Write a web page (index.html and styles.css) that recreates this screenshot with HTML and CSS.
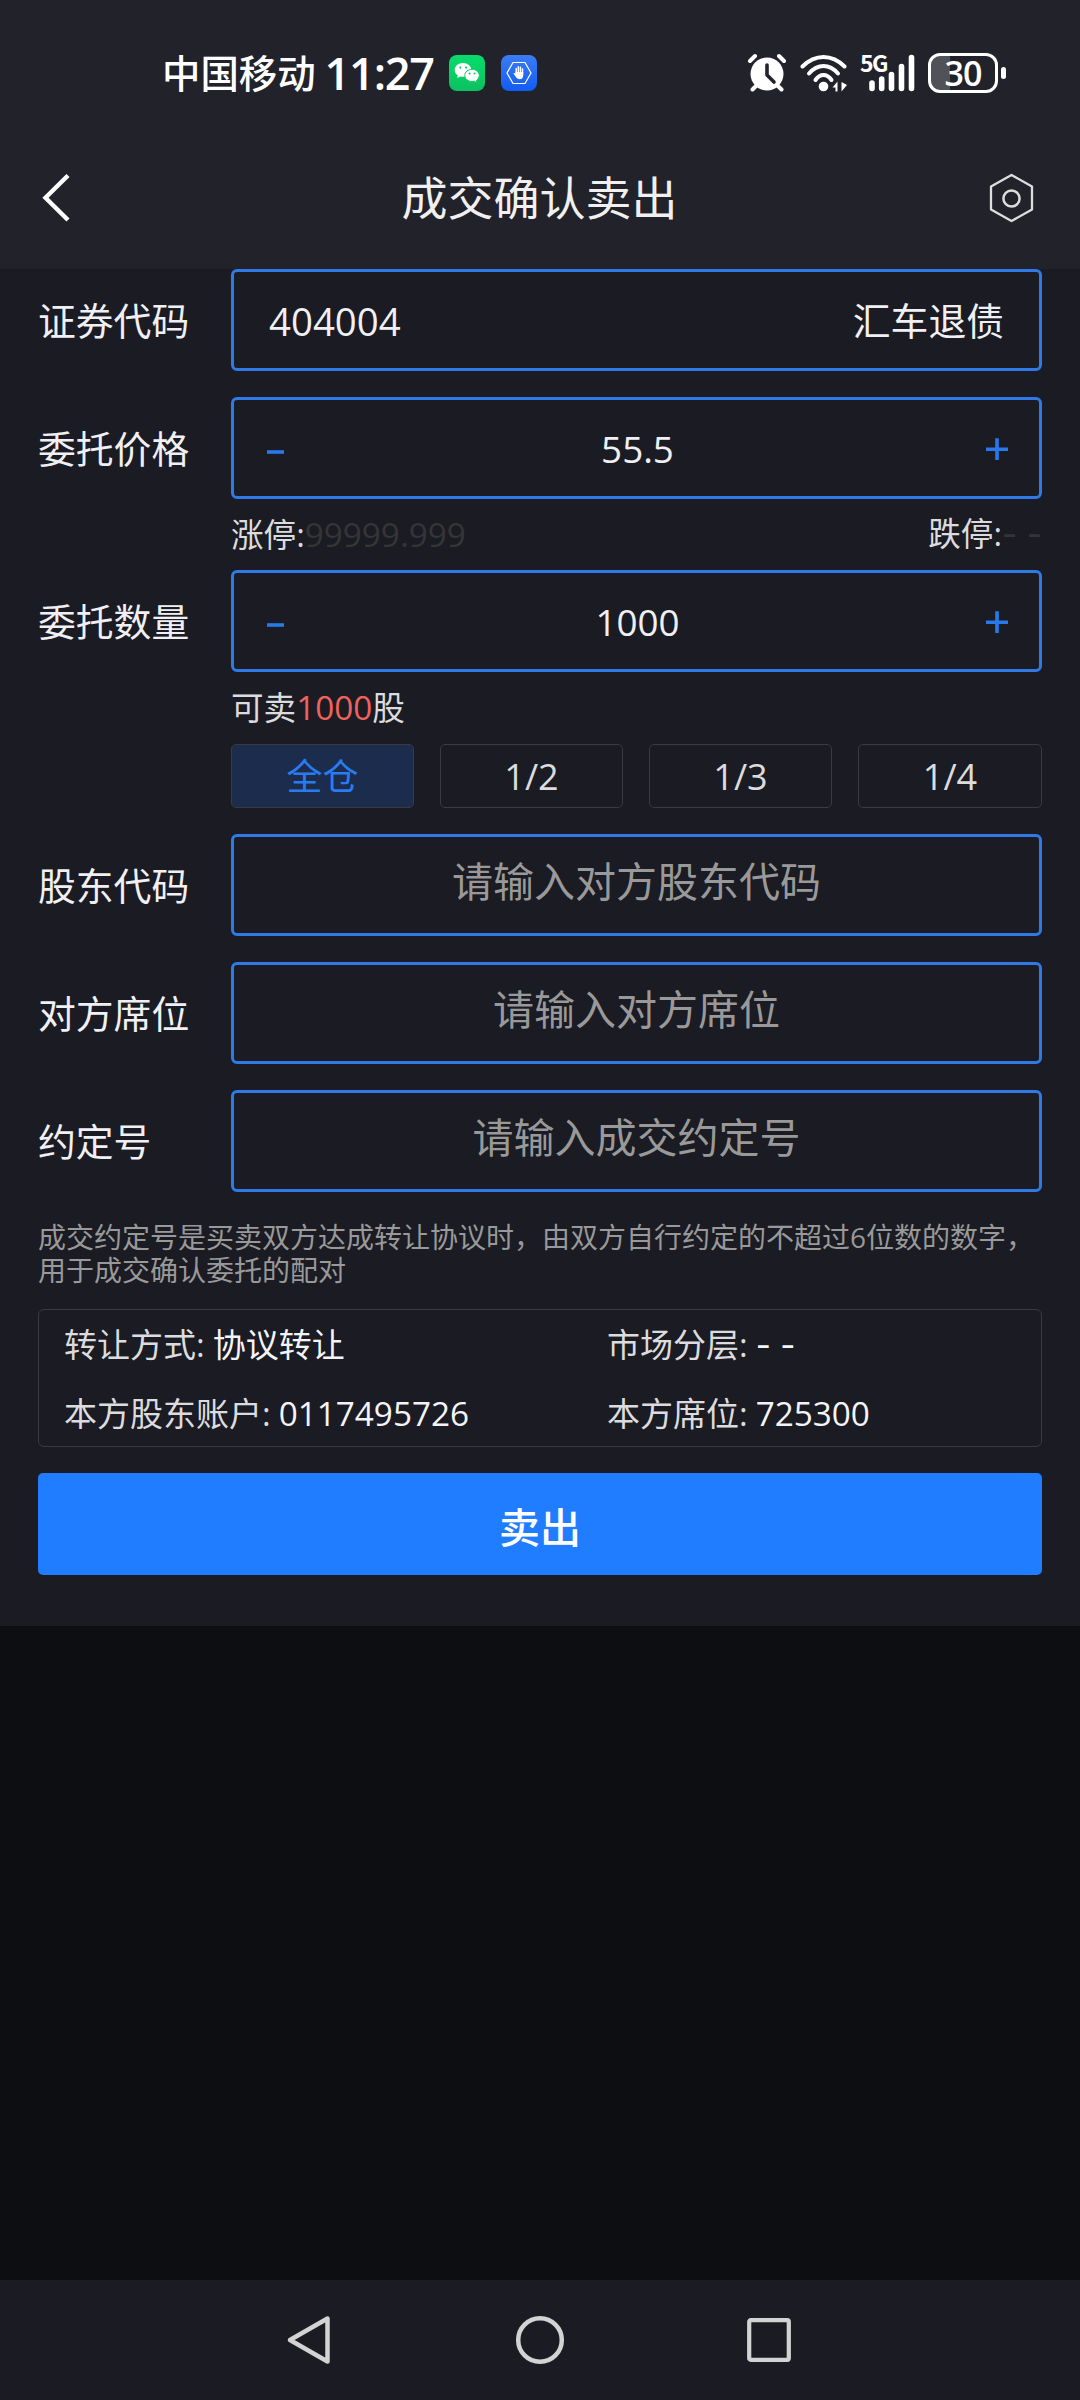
FILE: index.html
```html
<!DOCTYPE html>
<html lang="zh-CN">
<head>
<meta charset="utf-8">
<title>成交确认卖出</title>
<link rel="stylesheet" href="styles.css">
</head>
<body>
<div class="screen">
  <header class="top">
    <div class="status">
      <div class="status-left">
        <span class="carrier">中国移动</span>
        <span class="time">11:27</span>
        <svg class="app-icon" width="36" height="36" viewBox="0 0 36 36">
          <defs><linearGradient id="wx" x1="0" y1="0" x2="0" y2="1"><stop offset="0" stop-color="#06dc6c"/><stop offset="1" stop-color="#0cc160"/></linearGradient></defs>
          <rect width="36" height="36" rx="8" fill="url(#wx)"/>
          <path d="M14 8C9.300 8 5.700 11.100 5.700 14.900c0 2.200 1.100 4.100 3 5.300L8.300 23l3-1.600c.9.200 1.800.3 2.700.3 4.700 0 8.300-3 8.300-6.800S18.700 8 14 8z" fill="#fff"/>
          <circle cx="11.300" cy="12.600" r="1.100" fill="#08cf67"/><circle cx="17" cy="12.600" r="1.100" fill="#08cf67"/>
          <path d="M23 14.300c-4 0-7.200 2.700-7.200 6.100s3.200 6.100 7.200 6.100c.8 0 1.600-.1 2.300-.3l2.800 1.500-.5-2.500c1.600-1.100 2.700-2.800 2.700-4.800 0-3.400-3.300-6.100-7.300-6.100z" fill="#fff" stroke="#0bc964" stroke-width="1"/>
          <circle cx="20.600" cy="18.500" r="1" fill="#0ac765"/><circle cx="25.500" cy="18.500" r="1" fill="#0ac765"/>
        </svg>
        <svg class="app-icon" width="36" height="36" viewBox="0 0 36 36">
          <defs><linearGradient id="hd" x1="0" y1="0" x2="0" y2="1"><stop offset="0" stop-color="#3c7cf4"/><stop offset="1" stop-color="#115cf2"/></linearGradient></defs>
          <rect width="36" height="36" rx="8" fill="url(#hd)"/>
          <path d="M12 7.500h12L30 18l-6 10.500H12L6 18z" fill="none" stroke="#fff" stroke-width="1.200"/>
          <path d="M15.200 19v-5.500M17.300 17v-5.200M19.400 17v-4.800M21.500 19v-5" stroke="#fff" stroke-width="1.500" stroke-linecap="round"/>
          <path d="M14.500 17h7.700v3.500c0 2.200-1.200 3.700-3.500 3.700-2 0-3-1-4-2.500l-2.200-3.200c.6-.8 1.300-.5 2 .2z" fill="#fff"/>
        </svg>
      </div>
      <div class="status-right">
        <svg width="40" height="40" viewBox="0 0 40 40">
          <circle cx="20" cy="21" r="16.500" fill="#fff"/>
          <path d="M3 8l5-5M37 8l-5-5" stroke="#fff" stroke-width="4" stroke-linecap="round"/>
          <path d="M9 33l-3.500 3.500M31 33l3.500 3.500" stroke="#fff" stroke-width="4" stroke-linecap="round"/>
          <path d="M20 12v10l7 7" fill="none" stroke="#22232c" stroke-width="3.600" stroke-linecap="round" stroke-linejoin="round"/>
        </svg>
        <svg class="wifi" width="48" height="40" viewBox="0 0 48 40">
          <g fill="none" stroke="#fff" stroke-width="4" stroke-linecap="round">
            <path d="M2.500 13.500Q12 4 23.500 4t21 9.500"/>
            <path d="M9 20.500Q15.500 13 23.500 13T38 20.500"/>
            <path d="M15.500 27Q19 22 23.500 22t8 5"/>
          </g>
          <circle cx="23.500" cy="33.500" r="4.800" fill="#fff"/>
          <path d="M32.500 34.500l5-6V38.500h-2v-4zM41.500 38.500V29l5.500 3z" fill="#fff"/>
        </svg>
        <div class="signal">
          <span class="net">5G</span>
          <svg width="56" height="40" viewBox="0 0 56 40">
            <path d="M12 30v5.500M21.700 26v9.500M31.500 21.500v14M41.500 13.500v22M51.500 4.500v31" stroke="#fff" stroke-width="5.600" stroke-linecap="round"/>
          </svg>
        </div>
        <div class="battery"><span>30</span></div>
        <i class="battery-cap"></i>
      </div>
    </div>
    <div class="titlebar">
      <svg class="back" width="34" height="50" viewBox="0 0 34 50"><path d="M28 2.500L5.500 24.700 28 47" fill="none" stroke="#fff" stroke-width="4.400"/></svg>
      <h1>成交确认卖出</h1>
      <svg class="setting" width="46" height="52" viewBox="0 0 46 52">
        <path d="M22.500 3L43 14.500v23L22.500 49 2 37.500v-23z" fill="none" stroke="#ddd" stroke-width="2.300" stroke-linejoin="round"/>
        <circle cx="22.500" cy="26.500" r="8.100" fill="none" stroke="#ddd" stroke-width="2.500"/>
      </svg>
    </div>
  </header>

  <main class="form">
    <div class="row"><label>证券代码</label>
      <div class="field between"><span class="code">404004</span><span class="name">汇车退债</span></div></div>
    <div class="row gap"><label>委托价格</label>
      <div class="field stepper">
        <svg class="minus" width="18" height="24" viewBox="0 0 18 24"><path d="M0 16h17" stroke="#2979ee" stroke-width="3.600"/></svg>
        <span>55.5</span>
        <svg width="22" height="24" viewBox="0 0 22 24"><path d="M0 13.300h22M11 2.300v22" stroke="#2979ee" stroke-width="3.600"/></svg>
      </div></div>
    <div class="hint limits"><span>涨停:<em class="dim">99999.999</em></span><span>跌停:<em class="dim dash">- -</em></span></div>
    <div class="row"><label>委托数量</label>
      <div class="field stepper">
        <svg class="minus" width="18" height="24" viewBox="0 0 18 24"><path d="M0 16h17" stroke="#2979ee" stroke-width="3.600"/></svg>
        <span>1000</span>
        <svg width="22" height="24" viewBox="0 0 22 24"><path d="M0 13.300h22M11 2.300v22" stroke="#2979ee" stroke-width="3.600"/></svg>
      </div></div>
    <div class="hint sellable"><span>可卖<em class="red">1000</em>股</span></div>
    <div class="ratios">
      <div class="ratio active">全仓</div><div class="ratio">1/2</div><div class="ratio">1/3</div><div class="ratio">1/4</div>
    </div>
    <div class="row gap"><label>股东代码</label><div class="field placeholder">请输入对方股东代码</div></div>
    <div class="row gap"><label>对方席位</label><div class="field placeholder">请输入对方席位</div></div>
    <div class="row gap"><label>约定号</label><div class="field placeholder">请输入成交约定号</div></div>
    <p class="note">成交约定号是买卖双方达成转让协议时，由双方自行约定的不超过6位数的数字，<br>用于成交确认委托的配对</p>
    <div class="info">
      <div>转让方式:<b>协议转让</b></div>
      <div>市场分层:<b class="dash">- -</b></div>
      <div>本方股东账户:<b class="num">0117495726</b></div>
      <div>本方席位:<b class="num">725300</b></div>
    </div>
    <div class="submit">卖出</div>
  </main>

  <nav class="nav">
    <svg width="50" height="52" viewBox="0 0 50 52"><path d="M41.500 4.500v43L4 26z" fill="none" stroke="#d3d3d3" stroke-width="4.500" stroke-linejoin="round"/></svg>
    <svg width="50" height="52" viewBox="0 0 50 52"><circle cx="25" cy="26" r="21.800" fill="none" stroke="#d3d3d3" stroke-width="4.500"/></svg>
    <svg width="50" height="52" viewBox="0 0 50 52"><rect x="5.200" y="6.200" width="39.600" height="39.600" rx="1.500" fill="none" stroke="#d3d3d3" stroke-width="4.200"/></svg>
  </nav>
</div>
</body>
</html>
```
FILE: styles.css
```css
* { box-sizing: border-box; }
body {
  margin: 0;
  background: #0d0e12;
  color: #f0f0f4;
  font-family: "Open Sans", "Noto Sans CJK SC", sans-serif;
}
svg { display: block; flex: none; }
em, b { font-style: normal; font-weight: 400; }
.screen { width: 1080px; height: 2400px; display: flex; flex-direction: column; }

.top { height: 269px; background: #22222b; flex: none; }
.status { height: 127px; padding: 20px 74px 0 162px; display: flex; justify-content: space-between; align-items: center; color: #fff; }
.status-left, .status-right { display: flex; align-items: center; height: 46px; margin-top: -1px; }
.carrier { font-size: 38.400px; font-weight: 500; line-height: 46px; white-space: nowrap; }
.time { width: 113px; margin: 0 11px 0 9px; font-size: 45px; font-weight: 600; line-height: 46px; letter-spacing: -1.200px; white-space: nowrap; }
.app-icon + .app-icon { margin-left: 16px; }
.wifi { margin-left: 13px; }
.signal { position: relative; margin-left: 11px; width: 58px; }
.signal svg { margin-left: 1px; }
.net { position: absolute; left: 1px; top: -3px; font-family: "Noto Sans CJK SC", sans-serif; font-size: 23px; line-height: 24px; font-weight: 700; letter-spacing: -1.500px; }
.battery { width: 70px; height: 40px; margin-left: 11px; border: 3px solid #fff; border-radius: 12px; background: linear-gradient(90deg, #515158 19px, transparent 19px); display: flex; align-items: center; justify-content: center; }
.battery span { font-family: "Open Sans", sans-serif; font-size: 34px; font-weight: 600; line-height: 34px; letter-spacing: -1px; }
.battery-cap { width: 5px; height: 12px; margin-left: 3px; border-radius: 3px; background: #fff; }
.status-right > svg:first-child { margin-left: -2px; }

.titlebar { height: 142px; padding: 0 45px 0 40px; display: flex; align-items: center; justify-content: space-between; }
.titlebar h1 { margin: 0 0 0 16px; font-size: 46px; font-weight: 400; line-height: 58px; height: 60px; color: #f0f0f0; }

.form { height: 1357px; flex: none; padding: 0 38px; background: #1a1b23; }
.row { display: flex; height: 102px; }
.row.gap { margin-top: 26px; }
.row label { width: 193px; flex: none; font-size: 37.800px; line-height: 103px; }
.field { flex: 1; height: 102px; border: 3px solid #2f7ae6; border-radius: 6px; display: flex; align-items: center; line-height: 60px; }
.between { justify-content: space-between; padding: 1px 35px 0; }
.code { font-size: 38.400px; }
.name { font-size: 37.800px; }
.stepper { justify-content: space-between; padding: 0 31px 0 33px; font-size: 36.800px; }
.stepper span { padding-top: 1px; }
.stepper .minus { margin-right: 4px; }
.placeholder { justify-content: center; padding-bottom: 9px; font-size: 41px; color: #999; }
.hint { margin-left: 193px; font-size: 32.600px; color: #dcdcde; white-space: nowrap; display: flex; justify-content: space-between; }
.limits { height: 71px; line-height: 70px; }
.sellable { height: 72px; line-height: 71px; }
.dim, .red { font-size: 33.300px; }
.dim { color: #353535; }
.red { color: #f0625b; }
.dash { font-family: Inter, sans-serif; }
.ratios { margin-left: 193px; display: grid; grid-template-columns: 183px 183px 183px 184px; gap: 26px; }
.ratio { height: 64px; border: 1px solid #3a3b40; border-radius: 5px; text-align: center; font-size: 36px; line-height: 64px; color: #dcdcde; }
.ratio.active { background: #1b2c4c; color: #2a7bf0; }
.note { margin: 29px 0 0; font-size: 28px; line-height: 33px; color: #999; white-space: nowrap; }
.info { margin-top: 22px; height: 138px; border: 1px solid #3a3b40; border-radius: 6px; padding: 0 25px; display: grid; grid-template-columns: 543px 1fr; grid-template-rows: 69px 67px; line-height: 69px; font-size: 33px; color: #dcdcde; white-space: nowrap; }
.info b { margin-left: 8px; color: #f4f4f8; }
.info .num { font-size: 33.300px; }
.submit { margin-top: 26px; height: 102px; padding-top: 6px; border-radius: 5px; background: #207dff; color: #fff; font-size: 41px; font-weight: 500; line-height: 97px; text-align: center; }

.nav { margin-top: auto; height: 120px; background: #1b1b23; display: flex; align-items: center; justify-content: center; gap: 179px; }
```
